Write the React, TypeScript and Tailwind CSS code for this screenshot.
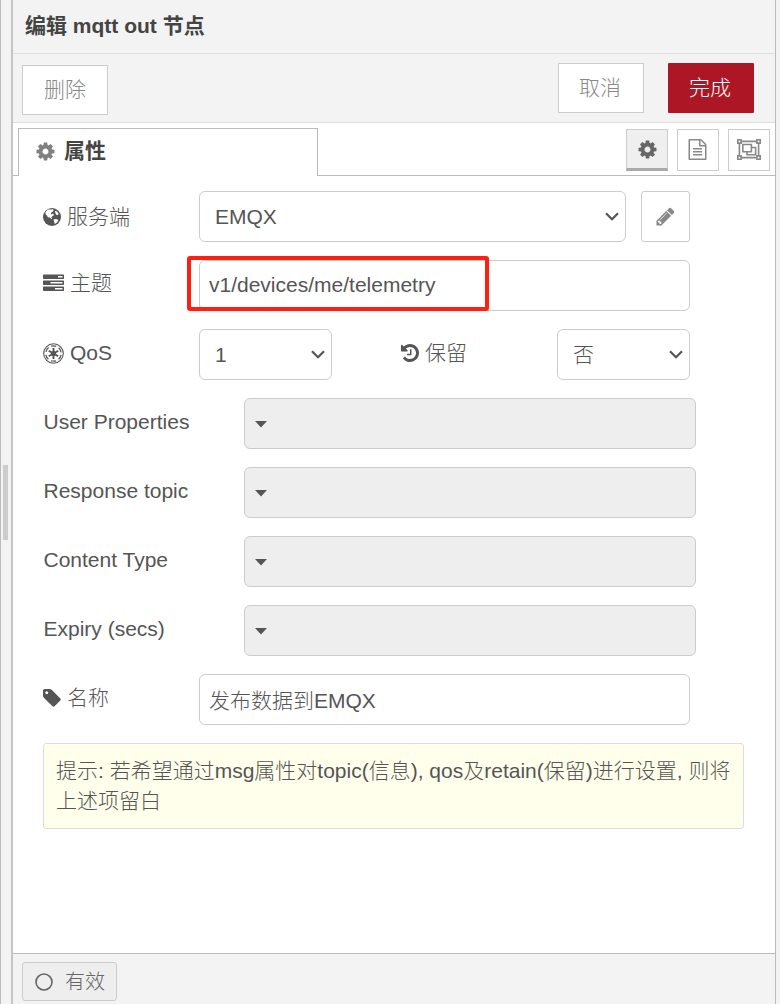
import type { ReactNode } from "react";

const paths = {
  cog: "M1152 896q0-106-75-181t-181-75-181 75-75 181 75 181 181 75 181-75 75-181zm512-109v222q0 12-8 23t-20 13l-185 28q-19 54-39 91 35 50 107 138 10 12 10 25t-9 23q-27 37-99 108t-94 71q-12 0-26-9l-138-108q-44 23-91 38-16 136-29 186-7 28-36 28h-222q-14 0-24.5-8.5t-11.5-21.5l-28-184q-49-16-90-37l-141 107q-10 9-25 9-14 0-25-11-126-114-165-168-7-10-7-23 0-12 8-23 15-21 51-66.5t54-70.5q-27-50-41-99l-183-27q-13-2-21-12.5t-8-23.5v-222q0-12 8-23t19-13l186-28q14-46 39-92-40-57-107-138-10-12-10-24 0-10 9-23 26-36 98.5-107.5t94.5-71.5q13 0 26 10l138 107q44-23 91-38 16-136 29-186 7-28 36-28h222q14 0 24.5 8.5t11.5 21.5l28 184q49 16 90 37l142-107q9-9 24-9 13 0 25 10 129 119 165 170 7 8 7 22 0 12-8 23-15 21-51 66.5t-54 70.5q26 50 41 98l183 28q13 2 21 12.5t8 23.5z",
  pencil: "M491 1536l91-91-235-235-91 91v107h128v128h107zm523-928q0-22-22-22-10 0-17 7l-542 542q-7 7-7 17 0 22 22 22 10 0 17-7l542-542q7-7 7-17zm-54-192l416 416-832 832h-416v-416zm683 96q0 53-37 90l-166 166-416-416 166-165q36-38 90-38 53 0 91 38l235 234q37 39 37 91z",
  file: "M1596 380q28 28 48 76t20 88v1152q0 40-28 68t-68 28h-1344q-40 0-68-28t-28-68v-1600q0-40 28-68t68-28h896q40 0 88 20t76 48zm-444-244v376h376q-10-29-22-41l-313-313q-12-12-41-22zm384 1528v-1024h-416q-40 0-68-28t-28-68v-416h-768v1536h1280zm-1024-864q0-14 9-23t23-9h704q14 0 23 9t9 23v64q0 14-9 23t-23 9h-704q-14 0-23-9t-9-23v-64zm736 224q14 0 23 9t9 23v64q0 14-9 23t-23 9h-704q-14 0-23-9t-9-23v-64q0-14 9-23t23-9h704zm0 256q14 0 23 9t9 23v64q0 14-9 23t-23 9h-704q-14 0-23-9t-9-23v-64q0-14 9-23t23-9h704z",
  tag: "M576 448q0-53-37.5-90.5t-90.5-37.5-90.5 37.5-37.5 90.5 37.5 90.5 90.5 37.5 90.5-37.5 37.5-90.5zm1067 576q0 53-37 90l-491 492q-39 37-91 37-53 0-90-37l-715-716q-38-37-64.5-101t-26.5-117v-416q0-52 38-90t90-38h416q53 0 117 26.5t102 64.5l715 714q37 39 37 91z",
  history: "M1664 896q0 156-61 298t-164 245-245 164-298 61q-172 0-327-72.5t-264-204.5q-7-10-6.5-22.5t8.5-20.5l137-138q10-9 25-9 16 2 23 12 73 95 179 147t225 52q104 0 198.5-40.5t163.5-109.5 109.5-163.5 40.5-198.5-40.5-198.5-109.5-163.5-163.5-109.5-198.5-40.5q-98 0-188 35.5t-160 101.5l137 138q31 30 14 69-17 40-59 40h-448q-26 0-45-19t-19-45v-448q0-42 40-59 39-17 69 14l130 129q107-101 244.5-156.5t284.5-55.5q156 0 298 61t245 164 164 245 61 298zm-640-288v448q0 14-9 23t-23 9h-320q-14 0-23-9t-9-23v-64q0-14 9-23t23-9h224v-352q0-14 9-23t23-9h64q14 0 23 9t9 23z",
  tasks: "M1024 1408h640v-128h-640v128zm-384-512h1024v-128h-1024v128zm640-512h384v-128h-384v128zm512 832v256q0 26-19 45t-45 19h-1664q-26 0-45-19t-19-45v-256q0-26 19-45t45-19h1664q26 0 45 19t19 45zm0-512v256q0 26-19 45t-45 19h-1664q-26 0-45-19t-19-45v-256q0-26 19-45t45-19h1664q26 0 45 19t19 45zm0-512v256q0 26-19 45t-45 19h-1664q-26 0-45-19t-19-45v-256q0-26 19-45t45-19h1664q26 0 45 19t19 45z",
};

function Icon({ name, className = "size-[21px]", viewBox = "0 0 1792 1792" }: { name: keyof typeof paths; className?: string; viewBox?: string }) {
  return (
    <svg viewBox={viewBox} fill="currentColor" className={`shrink-0 ${className}`}>
      <path d={paths[name]} />
    </svg>
  );
}

function Globe() {
  return (
    <svg viewBox="0 0 18 18" className="size-[18px] shrink-0">
      <circle cx="9" cy="9" r="9" fill="currentColor" />
      <path fill="#fff" d="M8.2 1.4 10 1.3l.9.9-1.1.5.3.9-1.5.7-.8 1.2.7.9 1-.7 1 .2.4 1.3-1.4.8-1.1 1.5.6 1.2-.8.3-1.3-1.4-2.1-.4-.8-1.8-1.1-.7-.6-1.8 1-2 2-1.5zM12 2.7l2 .9 1.7 2.5-.8.9-1.7-.3-.9-1.7zM10.5 11.6l2.4-.7 1.7.6.7 1-1.3 1.9-2.2 1.6-.7-2z" />
    </svg>
  );
}

function Emblem() {
  return (
    <svg viewBox="0 0 21 21" fill="none" stroke="currentColor" className="mr-[6px] size-[21px] shrink-0">
      <circle cx="10.5" cy="10.5" r="9.8" strokeWidth="1.1" />
      <circle cx="10.5" cy="10.5" r="7.7" strokeWidth="1.3" strokeDasharray="5.2 2.86" strokeDashoffset="-1.4" />
      <circle cx="10.5" cy="10.5" r="2.6" fill="currentColor" stroke="none" />
      <path strokeWidth="1.9" d="M10.5 5v11M5.74 7.75l9.52 5.5M15.26 7.75l-9.52 5.5" />
    </svg>
  );
}

function ObjectGroup() {
  return (
    <svg viewBox="0 0 24 21" fill="none" stroke="currentColor" strokeWidth="1.6" className="h-[21px] w-6 shrink-0">
      <path d="M4 2.4h16M4 18.6h16M2.4 4v13M21.6 4v13M5.8 5.5h8.6v7.2H5.8zM14.6 8.5h4v7.3H10v-3" />
      <path d="M.8.8h3.3v3.3H.8zM19.9.8h3.3v3.3h-3.3zM.8 16.9h3.3v3.3H.8zM19.9 16.9h3.3v3.3h-3.3z" />
    </svg>
  );
}

function Chevron() {
  return (
    <svg viewBox="0 0 14 9" fill="none" stroke="currentColor" strokeWidth="2.2" className="h-[9px] w-[14px] shrink-0">
      <path d="M1 1.2 7 7.2 13 1.2" />
    </svg>
  );
}

function Select({ children, className }: { children: ReactNode; className: string }) {
  return (
    <div className={`flex h-[51px] items-center justify-between rounded-[6px] border border-[#ccc] pr-[6px] pl-[15px] ${className}`}>
      <span>{children}</span>
      <Chevron />
    </div>
  );
}

function Label({ icon, children, className = "w-[156px] pb-[3px]" }: { icon?: ReactNode; children: ReactNode; className?: string }) {
  return (
    <div className={`flex h-[51px] shrink-0 items-center ${className}`}>
      {icon}
      <span>{children}</span>
    </div>
  );
}

const properties = ["User Properties", "Response topic", "Content Type", "Expiry (secs)"];

export default function App() {
  return (
    <div className="flex h-[1004px] w-[780px] overflow-hidden bg-[#f3f3f3] font-['Liberation_Sans','Noto_Sans_CJK_SC',sans-serif] text-[21px] leading-[30px] font-light text-[#555]">
      <div className="flex w-[13px] shrink-0 items-start border-r-2 border-l border-r-[#c4c4c4] border-l-[#bbb] pt-[465px] pl-[2px]">
        <div className="h-[75px] w-[5px] bg-[#ccc]" />
      </div>
      <div className="flex w-[763px] shrink-0 flex-col border-r border-[#bbb] bg-white">
        <header className="h-[54px] shrink-0 border-b border-[#ddd] bg-[#f3f3f3] pt-[11px] pl-3 text-[21px] font-bold text-[#444]">编辑 mqtt out 节点</header>
        <div className="flex h-[69px] shrink-0 border-b border-[#ddd] bg-[#f3f3f3] pr-[21px] pl-[9px] text-[#888]">
          <button className="mt-[11px] h-[50px] w-[86px] border border-[#ccc] bg-white">删除</button>
          <button className="mt-[9px] ml-auto h-[50px] w-[86px] border border-[#ccc] bg-white pr-[2px]">取消</button>
          <button className="mt-[9px] ml-6 h-[50px] w-[86px] rounded-[1px] bg-[#ad1625] pr-[2px] text-white">完成</button>
        </div>
        <div className="flex h-[53px] shrink-0 bg-white">
          <div className="w-[5px] border-b border-[#bbb]" />
          <div className="mt-[5px] flex w-[300px] items-center border border-b-0 border-[#bbb] pb-[3px] pl-4 font-bold text-[#444]">
            <Icon name="cog" className="mr-2 size-[21px] text-[#808080]" />
            属性
          </div>
          <div className="flex flex-1 justify-end gap-[9px] border-b border-[#bbb] pt-[6px] pr-[5px] text-[#888]">
            <div className="flex h-[42px] w-[42px] items-center justify-center border border-b-3 border-[#ccc] border-b-[#aaa] bg-[#efefef] text-[#666]"><Icon name="cog" /></div>
            <div className="flex h-[42px] w-[42px] items-center justify-center border border-[#ccc] pr-px pb-[2px]"><Icon name="file" /></div>
            <div className="flex h-[42px] w-[42px] items-center justify-center border border-[#ccc] pb-[2px]"><ObjectGroup /></div>
          </div>
        </div>
        <main className="flex flex-1 flex-col gap-[18px] pt-[15px] pl-[30px]">
          <div className="flex">
            <Label className="w-[156px]" icon={<span className="mr-[6px]"><Globe /></span>}>服务端</Label>
            <Select className="w-[427px]">EMQX</Select>
            <div className="ml-[15px] flex h-[51px] w-[49px] items-center justify-center rounded-[3px] border border-[#ccc] text-[#888]"><Icon name="pencil" /></div>
          </div>
          <div className="relative flex">
            <Label className="w-[156px] pb-[5px]" icon={<Icon name="tasks" className="mr-[6px] size-[21px]" />}>主题</Label>
            <div className="flex h-[51px] w-[491px] items-center rounded-[6px] border border-[#ccc] pb-[2px] pl-[9px]">v1/devices/me/telemetry</div>
            <div className="absolute -top-1 left-[144px] h-[55px] w-[302px] rounded-[3px] border-4 border-[#ff1f12]" />
          </div>
          <div className="flex">
            <Label icon={<Emblem />}>QoS</Label>
            <Select className="w-[133px]">1</Select>
            <Label className="ml-[69px] w-[156px] pb-[3px]" icon={<Icon name="history" viewBox="128 128 1536 1536" className="mr-[6px] size-[18px]" />}>保留</Label>
            <Select className="w-[133px]">否</Select>
          </div>
          {properties.map((p) => (
            <div className="flex" key={p}>
              <Label className="w-[201px] pb-[3px] pl-[0.5px]">{p}</Label>
              <div className="flex h-[51px] w-[452px] items-center rounded-[6px] border border-[#ccc] bg-[#eee] pt-px pl-[9.5px]">
                <svg viewBox="0 0 12 7" className="h-[7px] w-3" fill="currentColor"><path d="M0 0h12L6 6.5z" /></svg>
              </div>
            </div>
          ))}
          <div className="flex">
            <Label icon={<Icon name="tag" viewBox="128 128 1536 1536" className="mr-[6px] size-[18px]" />}>名称</Label>
            <div className="flex h-[51px] w-[491px] items-center rounded-[6px] border border-[#ccc] pt-[2px] pl-[9px]">发布数据到EMQX</div>
          </div>
          <div className="h-[86px] w-[701px] rounded-[3px] border border-[#ddd] bg-[#ffffec] pt-3 pl-3 leading-[30px]">
            提示: 若希望通过msg属性对topic(信息), qos及retain(保留)进行设置, 则将
            <br />
            上述项留白
          </div>
        </main>
        <footer className="h-[51px] shrink-0 border-t border-[#bbb] bg-[#f3f3f3] pt-2 pl-[9px]">
          <button className="flex h-[39px] w-[95px] items-center rounded-[3px] border border-[#ccc] bg-[#eee] pl-3 text-[20px] text-[#666]">
            <svg viewBox="0 0 18 18" className="mr-3 size-[18px]" fill="none" stroke="currentColor" strokeWidth="1.6"><circle cx="9" cy="9" r="8" /></svg>
            有效
          </button>
        </footer>
      </div>
    </div>
  );
}
